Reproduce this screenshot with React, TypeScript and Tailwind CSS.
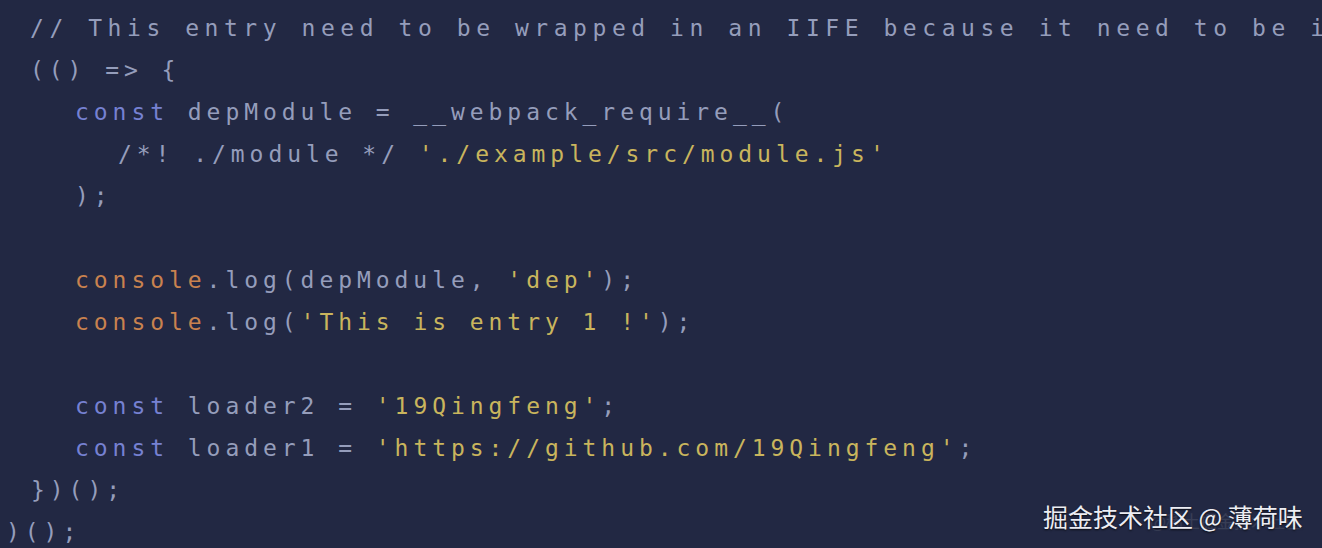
import React from "react";

type Tok = [string, string];

const P = "text-[#959dbb]";
const K = "text-[#7681d2]";
const O = "text-[#c9824f]";
const S = "text-[#c9b55d]";

const lines: { pl: string; toks: Tok[]; comment?: boolean }[] = [
  {
    pl: "pl-[30px]",
    comment: true,
    toks: [[P, "// This entry need to be wrapped in an IIFE because it need to be isolated against other modules in the chunk."]],
  },
  { pl: "pl-[30px]", toks: [[P, "(() => {"]] },
  {
    pl: "pl-[75px]",
    toks: [
      [K, "const"],
      [P, " depModule = __webpack_require__("],
    ],
  },
  {
    pl: "pl-[118px]",
    toks: [
      [P, "/*! ./module */ "],
      [S, "'./example/src/module.js'"],
    ],
  },
  { pl: "pl-[75px]", toks: [[P, ");"]] },
  { pl: "pl-[75px]", toks: [[P, " "]] },
  {
    pl: "pl-[75px]",
    toks: [
      [O, "console"],
      [P, ".log(depModule, "],
      [S, "'dep'"],
      [P, ");"],
    ],
  },
  {
    pl: "pl-[75px]",
    toks: [
      [O, "console"],
      [P, ".log("],
      [S, "'This is entry 1 !'"],
      [P, ");"],
    ],
  },
  { pl: "pl-[75px]", toks: [[P, " "]] },
  {
    pl: "pl-[75px]",
    toks: [
      [K, "const"],
      [P, " loader2 = "],
      [S, "'19Qingfeng'"],
      [P, ";"],
    ],
  },
  {
    pl: "pl-[75px]",
    toks: [
      [K, "const"],
      [P, " loader1 = "],
      [S, "'https://github.com/19Qingfeng'"],
      [P, ";"],
    ],
  },
  { pl: "pl-[31px]", toks: [[P, "})();"]] },
  { pl: "pl-[6px]", toks: [[P, ")();"]] },
];

export default function App() {
  return (
    <div className="relative h-[548px] w-[1322px] overflow-hidden bg-[#222843]">
      <div
        className="flex flex-col pt-[7px] text-[23px]"
        style={{ fontFamily: '"DejaVu Sans Mono", monospace' }}
      >
        {lines.map((l, i) => (
          <div
            key={i}
            className={`h-[42px] whitespace-pre leading-[42px] ${l.pl} ${
              l.comment ? "tracking-[5.55px]" : "tracking-[4.95px]"
            }`}
          >
            {l.toks.map((t, j) => (
              <span key={j} className={t[0]}>
                {t[1]}
              </span>
            ))}
          </div>
        ))}
      </div>
      <div
        className="absolute left-[1150px] top-[508px] text-[17px] whitespace-pre text-[#ffffff]/10"
        style={{ fontFamily: '"Noto Sans CJK SC", sans-serif' }}
      >
        @稀土掘金技术社区
      </div>
      <div
        className="absolute left-[1043px] top-[499px] whitespace-pre text-[25px] leading-[34px] text-[#ecedf3] [text-shadow:0_1px_2px_rgba(0,0,0,0.8)]"
        style={{ fontFamily: '"Noto Sans CJK SC", sans-serif' }}
      >
        掘金技术社区 @ 薄荷味
      </div>
    </div>
  );
}
